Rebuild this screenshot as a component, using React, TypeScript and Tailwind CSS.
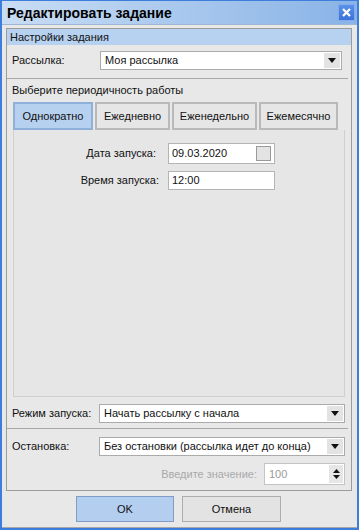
import React from "react";

const font = { fontFamily: '"Liberation Sans", Arial, sans-serif' };

function Arrow() {
  return (
    <svg width="8" height="5" viewBox="0 0 8 5">
      <path d="M0 0 H8 L4 5 Z" fill="#111" />
    </svg>
  );
}

function Combo({ text }: { text: string }) {
  return (
    <div className="flex h-[19px] min-w-0 flex-1 items-stretch border border-[#ababab] bg-white">
      <div className="flex min-w-0 flex-1 items-center overflow-hidden whitespace-nowrap pl-[4px] text-[11px] leading-[13px] text-[#111]">
        {text}
      </div>
      <div className="m-[1px] flex w-[16px] shrink-0 items-center justify-center bg-[#e3e3e3]">
        <Arrow />
      </div>
    </div>
  );
}

function Tab({ label, active, w }: { label: string; active?: boolean; w: string }) {
  return (
    <div
      className={`flex h-[28px] ${w} items-center justify-center border-2 text-[11px] leading-[13px] text-[#111] ${
        active ? "border-[#8fb0da] bg-[#b6d0f0]" : "border-[#b9b9b9] bg-[#e6e6e6]"
      }`}
    >
      {label}
    </div>
  );
}

export default function App() {
  return (
    <div
      style={font}
      className="flex h-[530px] w-[359px] flex-col border-x-2 border-b-2 border-t border-[#3d7edc] bg-[#e8e8e8]"
    >
      {/* title bar */}
      <div className="flex h-[24px] shrink-0 items-center justify-between border-b border-[#9db6d6] bg-gradient-to-r from-[#c9ddf4] to-[#89b3e6] pl-[5px] pr-[2px]">
        <span className="text-[14px] font-bold leading-[18px] text-black">Редактировать задание</span>
        <div className="flex h-[17px] w-[17px] items-center justify-center border border-[#86aaee] bg-gradient-to-b from-[#5a91ea] to-[#3d73d8]">
          <svg width="9" height="9" viewBox="0 0 9 9">
            <path d="M1 1 L8 8 M8 1 L1 8" stroke="#fff" strokeWidth="2.2" />
          </svg>
        </div>
      </div>

      {/* group */}
      <div className="ml-[4px] mr-[5px] mt-[3px] flex h-[463px] shrink-0 flex-col border border-[#9c9c9c]">
        <div className="flex h-[16px] items-center bg-[#b7d1f0] pl-[3px] text-[11px] leading-[13px] text-[#111]">
          Настройки задания
        </div>

        <div className="mt-[6px] flex items-center pl-[5px] pr-[9px]">
          <span className="w-[88px] shrink-0 text-[11px] leading-[13px] text-[#111]">Рассылка:</span>
          <Combo text="Моя рассылка" />
        </div>

        <div className="mr-[3px] mt-[8px] h-[2px] border-t border-[#a8a8a8]" />

        <div className="mt-[4px] pl-[5px] text-[11px] leading-[13px] text-[#111]">Выберите периодичность работы</div>

        <div className="ml-[6px] mt-[5px] flex gap-[2px]">
          <Tab label="Однократно" active w="w-[80px]" />
          <Tab label="Ежедневно" w="w-[75px]" />
          <Tab label="Еженедельно" w="w-[85px]" />
          <Tab label="Ежемесячно" w="w-[79px]" />
        </div>

        <div className="ml-[6px] mr-[6px] flex h-[267px] flex-col border border-t-0 border-[#cfcfcf] bg-[#e6e6e6]">
          <div className="mt-[13px] flex items-center">
            <span className="w-[142px] shrink-0 text-right text-[11px] leading-[13px] text-[#111]">Дата запуска:</span>
            <div className="ml-[12px] flex h-[21px] w-[107px] items-center justify-between border border-[#b4b4b4] bg-white pl-[3px] pr-[3px]">
              <span className="text-[11px] leading-[13px] text-[#111]">09.03.2020</span>
              <div className="h-[15px] w-[15px] border border-[#9a9a9a] bg-[#e3e3e3]" />
            </div>
          </div>
          <div className="mt-[7px] flex items-center">
            <span className="w-[145px] shrink-0 text-right text-[11px] leading-[13px] text-[#111]">Время запуска:</span>
            <div className="ml-[9px] flex h-[19px] w-[107px] items-center border border-[#b4b4b4] bg-white pl-[3px]">
              <span className="text-[11px] leading-[13px] text-[#111]">12:00</span>
            </div>
          </div>
        </div>

        <div className="mt-[7px] flex items-center pl-[5px] pr-[6px]">
          <span className="w-[87px] shrink-0 text-[11px] leading-[13px] text-[#111]">Режим запуска:</span>
          <Combo text="Начать рассылку с начала" />
        </div>

        <div className="mr-[3px] mt-[5px] h-[2px] border-t border-[#a8a8a8]" />

        <div className="mt-[7px] flex items-center pl-[5px] pr-[6px]">
          <span className="w-[87px] shrink-0 text-[11px] leading-[13px] text-[#111]">Остановка:</span>
          <Combo text="Без остановки (рассылка идет до конца)" />
        </div>

        <div className="mt-[7px] flex items-center justify-end pr-[6px]">
          <span className="mr-[7px] text-[11px] leading-[13px] text-[#a8a8a8]">Введите значение:</span>
          <div className="flex h-[22px] w-[81px] items-stretch border border-[#c4c4c4] bg-white">
            <div className="flex flex-1 items-center pl-[4px] text-[11px] leading-[13px] text-[#9a9a9a]">100</div>
            <div className="m-[1px] flex w-[14px] flex-col items-center justify-center gap-[2px] bg-[#e6e6e6]">
              <svg width="7" height="4" viewBox="0 0 7 4">
                <path d="M0 4 H7 L3.5 0 Z" fill="#111" />
              </svg>
              <svg width="7" height="4" viewBox="0 0 7 4">
                <path d="M0 0 H7 L3.5 4 Z" fill="#111" />
              </svg>
            </div>
          </div>
        </div>
      </div>

      {/* buttons */}
      <div className="mt-[5px] flex justify-center gap-[8px] pr-[2px]">
        <div className="flex h-[26px] w-[98px] items-center justify-center border border-[#7f9dc6] bg-[#b4cef0] text-[11px] leading-[13px] text-[#111]">
          OK
        </div>
        <div className="flex h-[26px] w-[99px] items-center justify-center border border-[#adadad] bg-[#e3e3e3] text-[11px] leading-[13px] text-[#111]">
          Отмена
        </div>
      </div>
      <div className="flex-1" />
      <div className="h-[1px] bg-[#a8a8a8]" />
    </div>
  );
}
